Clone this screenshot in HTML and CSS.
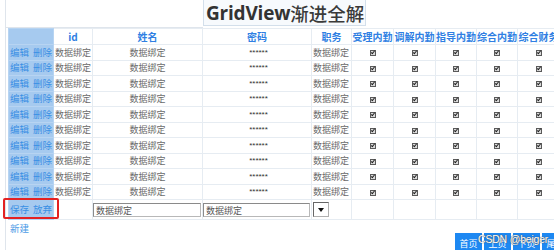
FILE: index.html
```html
<!DOCTYPE html>
<html lang="zh">
<head>
<meta charset="utf-8">
<title>GridView渐进全解</title>
<link rel="stylesheet" href="styles.css">
</head>
<body>
<div class="page">
  <div class="title-bar">
    <div class="title-left"></div>
    <h1 class="title"><span class="en">GridView</span><span class="zh">渐进全解</span></h1>
  </div>
  <table class="grid">
    <colgroup>
      <col class="c-ops"><col class="c-id"><col class="c-name"><col class="c-pwd"><col class="c-job">
      <col class="c-chk"><col class="c-chk"><col class="c-chk2"><col class="c-chk2"><col class="c-chk">
    </colgroup>
    <thead>
      <tr><th class="ops"></th><th>id</th><th>姓名</th><th>密码</th><th>职务</th><th>受理内勤</th><th>调解内勤</th><th>指导内勤</th><th>综合内勤</th><th>综合财务</th></tr>
    </thead>
    <tbody>
      <tr><td class="ops"><a>编辑</a><a>删除</a></td><td class="l">数据绑定</td><td>数据绑定</td><td class="pwd">******</td><td class="l">数据绑定</td><td><i class="cb"></i></td><td><i class="cb"></i></td><td><i class="cb"></i></td><td><i class="cb"></i></td><td><i class="cb"></i></td></tr>
      <tr><td class="ops"><a>编辑</a><a>删除</a></td><td class="l">数据绑定</td><td>数据绑定</td><td class="pwd">******</td><td class="l">数据绑定</td><td><i class="cb"></i></td><td><i class="cb"></i></td><td><i class="cb"></i></td><td><i class="cb"></i></td><td><i class="cb"></i></td></tr>
      <tr><td class="ops"><a>编辑</a><a>删除</a></td><td class="l">数据绑定</td><td>数据绑定</td><td class="pwd">******</td><td class="l">数据绑定</td><td><i class="cb"></i></td><td><i class="cb"></i></td><td><i class="cb"></i></td><td><i class="cb"></i></td><td><i class="cb"></i></td></tr>
      <tr><td class="ops"><a>编辑</a><a>删除</a></td><td class="l">数据绑定</td><td>数据绑定</td><td class="pwd">******</td><td class="l">数据绑定</td><td><i class="cb"></i></td><td><i class="cb"></i></td><td><i class="cb"></i></td><td><i class="cb"></i></td><td><i class="cb"></i></td></tr>
      <tr><td class="ops"><a>编辑</a><a>删除</a></td><td class="l">数据绑定</td><td>数据绑定</td><td class="pwd">******</td><td class="l">数据绑定</td><td><i class="cb"></i></td><td><i class="cb"></i></td><td><i class="cb"></i></td><td><i class="cb"></i></td><td><i class="cb"></i></td></tr>
      <tr><td class="ops"><a>编辑</a><a>删除</a></td><td class="l">数据绑定</td><td>数据绑定</td><td class="pwd">******</td><td class="l">数据绑定</td><td><i class="cb"></i></td><td><i class="cb"></i></td><td><i class="cb"></i></td><td><i class="cb"></i></td><td><i class="cb"></i></td></tr>
      <tr><td class="ops"><a>编辑</a><a>删除</a></td><td class="l">数据绑定</td><td>数据绑定</td><td class="pwd">******</td><td class="l">数据绑定</td><td><i class="cb"></i></td><td><i class="cb"></i></td><td><i class="cb"></i></td><td><i class="cb"></i></td><td><i class="cb"></i></td></tr>
      <tr><td class="ops"><a>编辑</a><a>删除</a></td><td class="l">数据绑定</td><td>数据绑定</td><td class="pwd">******</td><td class="l">数据绑定</td><td><i class="cb"></i></td><td><i class="cb"></i></td><td><i class="cb"></i></td><td><i class="cb"></i></td><td><i class="cb"></i></td></tr>
      <tr><td class="ops"><a>编辑</a><a>删除</a></td><td class="l">数据绑定</td><td>数据绑定</td><td class="pwd">******</td><td class="l">数据绑定</td><td><i class="cb"></i></td><td><i class="cb"></i></td><td><i class="cb"></i></td><td><i class="cb"></i></td><td><i class="cb"></i></td></tr>
      <tr><td class="ops"><a>编辑</a><a>删除</a></td><td class="l">数据绑定</td><td>数据绑定</td><td class="pwd">******</td><td class="l">数据绑定</td><td><i class="cb"></i></td><td><i class="cb"></i></td><td><i class="cb"></i></td><td><i class="cb"></i></td><td><i class="cb"></i></td></tr>
      <tr class="edit">
        <td class="ops"><a>保存</a><a>放弃</a><span class="mark"></span></td>
        <td></td>
        <td class="in"><span class="input">数据绑定</span></td>
        <td class="in"><span class="input">数据绑定</span></td>
        <td class="l in"><span class="select"><span class="arrow"></span></span></td>
        <td></td><td></td><td></td><td></td><td></td>
      </tr>
    </tbody>
  </table>
  <div class="footer">
    <a class="new">新建</a>
    <div class="pager">
      <span class="btn">首页</span><span class="btn">上页</span><span class="btn">下页</span><span class="btn">尾页</span>
    </div>
  </div>
</div>
<div class="watermark">CSDN @beiger</div>
</body>
</html>
```
FILE: styles.css
```css
html, body {
  margin: 0;
  padding: 0;
  background: #ffffff;
  overflow: hidden;
  width: 554px;
  height: 250px;
}
body {
  position: relative;
  font-family: "Noto Sans CJK SC", "Liberation Serif", serif;
}
.page {
  margin-left: 5px;
  width: 620px;
  border-left: 1px solid #dfe5ec;
  height: 260px;
}
.title-bar {
  display: flex;
  height: 28px;
}
.title-left {
  width: 197px;
  height: 27px;
  border-bottom: 1px solid #dfe5ec;
}
.title {
  margin: 0;
  height: 26px;
  width: 163px;
  box-sizing: border-box;
  border: 1px solid #d3dfeb;
  border-top: none;
  background: #f7fafd;
  display: flex;
  align-items: center;
  padding-left: 2px;
  color: #333333;
  line-height: 24px;
  font-weight: normal;
}
.title .en {
  font-family: "Open Sans", "Liberation Sans", sans-serif;
  font-weight: 700;
  font-size: 19px;
  letter-spacing: -0.2px;
}
.title .zh {
  font-family: "Noto Sans CJK SC", sans-serif;
  font-size: 18.5px;
  font-weight: 500;
  color: #3a3a3a;
}
.grid {
  margin-left: 2px;
  border-collapse: collapse;
  table-layout: fixed;
  width: 551px;
  font-size: 9px;
}
.c-ops { width: 45px; }
.c-id { width: 39px; }
.c-name { width: 110px; }
.c-pwd { width: 109px; }
.c-job { width: 40px; }
.c-chk { width: 42px; }
.c-chk2 { width: 41px; }
.grid th, .grid td {
  border: 1px solid #e6ecf2;
  padding: 0;
  text-align: center;
  white-space: nowrap;
  overflow: hidden;
  line-height: 13px;
}
.grid th {
  height: 15px;
  color: #2f7fe3;
  font-weight: 700;
  font-size: 10px;
  font-family: "Noto Sans CJK SC", sans-serif;
}
.grid td {
  height: 14.5px;
  color: #6a6a6a;
}
.grid th.ops, .grid td.ops {
  background: #a6caef;
  border-color: #b7d4f2;
  text-align: left;
  padding-left: 1px;
}
.grid td.ops a {
  color: #3a8fe4;
  font-size: 9.5px;
  margin-right: 4px;
}
.grid td.l {
  text-align: left;
  padding-left: 1px;
}
.grid td.pwd {
  font-family: "Liberation Sans", sans-serif;
  color: #333333;
  font-size: 8px;
  padding-left: 3px;
}
.cb {
  display: inline-block;
  position: relative;
  width: 4px;
  height: 4px;
  border: 1px solid #5a5a5a;
  background: #dcdcdc;
  vertical-align: middle;
}
.cb::after {
  content: "";
  position: absolute;
  left: 1px;
  top: -1px;
  width: 1px;
  height: 3px;
  border: solid #222222;
  border-width: 0 1px 1px 0;
  transform: rotate(40deg);
}
.grid tr.edit td {
  height: 19px;
}
.grid tr.edit td.ops {
  position: relative;
  overflow: visible;
  padding-left: 1px;
}
.mark {
  position: absolute;
  left: -6px;
  right: -6px;
  top: -2px;
  bottom: 0;
  border: 2px solid #e32222;
  border-radius: 2px;
}
.grid td.in {
  text-align: left;
  vertical-align: middle;
}
.input {
  display: block;
  margin: 0 1px 0 0;
  height: 14px;
  line-height: 13px;
  box-sizing: border-box;
  border: 1px solid #b8b8b8;
  border-top-color: #8a8a8a;
  border-left-color: #8a8a8a;
  padding-left: 2px;
  color: #555555;
  font-size: 9px;
  text-align: left;
}
.select {
  display: inline-block;
  position: relative;
  width: 16px;
  height: 15px;
  box-sizing: border-box;
  border: 1px solid #b0b0b0;
  border-top-color: #666666;
  border-left-color: #666666;
  vertical-align: middle;
  background: #ffffff;
}
.arrow {
  position: absolute;
  left: 4px;
  top: 5px;
  width: 0;
  height: 0;
  border-left: 3px solid transparent;
  border-right: 3px solid transparent;
  border-top: 4px solid #111111;
}
.footer {
  padding-left: 4px;
}
.new {
  display: block;
  margin-top: 2px;
  font-size: 9.5px;
  line-height: 12px;
  color: #4b9be6;
}
.pager {
  display: flex;
  gap: 2px;
  margin-left: 445px;
  margin-top: -1px;
}
.btn {
  display: inline-flex;
  align-items: center;
  justify-content: center;
  width: 27px;
  height: 20px;
  background: #1d88f2;
  color: #ffffff;
  font-size: 9px;
  flex: none;
}
.watermark {
  position: absolute;
  left: 478px;
  top: 233px;
  white-space: nowrap;
  font-family: "Liberation Sans", sans-serif;
  font-size: 10.5px;
  letter-spacing: -0.2px;
  color: #ffffff;
  text-shadow: 0 0 1px #555555, 0 0 1px #555555;
}
```
